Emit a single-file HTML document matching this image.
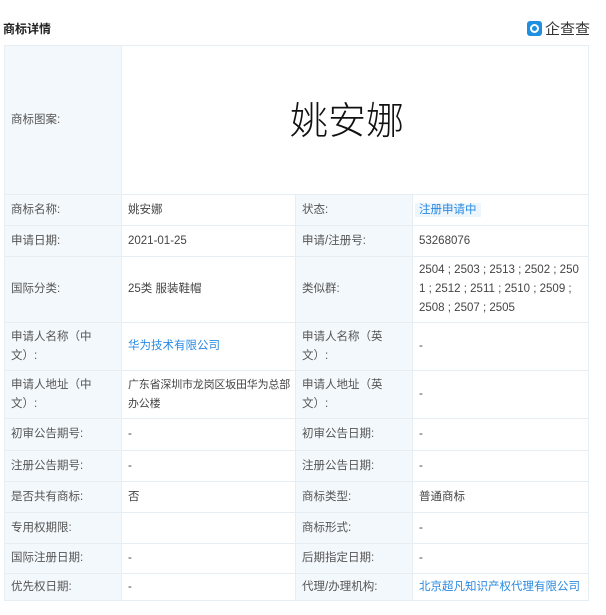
<!DOCTYPE html>
<html><head><meta charset="utf-8"><style>
body{margin:0;background:#fff;width:606px;height:615px;overflow:hidden;font-family:"Liberation Sans","Noto Sans CJK SC",sans-serif;font-size:11.5px;color:#444;position:relative}
.title{position:absolute;left:3px;top:20px;font-size:12px;font-weight:bold;color:#222}
.logo{position:absolute;left:527px;top:19px;height:18px;display:flex;align-items:center}
.logo .ic{width:15px;height:15px;background:#1e8fe1;border-radius:3px;position:relative;margin-right:3px}
.logo .ic:after{content:"";position:absolute;left:3px;top:3px;width:5px;height:5px;border:2px solid #fff;border-radius:50%}
.logo span{font-size:15px;color:#333;letter-spacing:0px}
table{position:absolute;left:4px;top:45px;border-collapse:collapse;table-layout:fixed;width:584px}
td{border:1px solid #e6edf3;padding:0 0 0 6px;vertical-align:middle;line-height:19px;white-space:nowrap;overflow:hidden}
td.l{background:#f3f8fc;color:#555}
.a{color:#2a8ae0}
.tag{background:#eef6fd;color:#2a8ae0;padding:1px 4px;margin-left:-4px}
</style></head><body>
<div class="title">商标详情</div>
<div class="logo"><div class="ic"></div><span>企查查</span></div>
<table>
<colgroup><col style="width:117px"><col style="width:174px"><col style="width:117px"><col style="width:176px"></colgroup>
<tr style="height:149px"><td class="l">商标图案:</td><td colspan="3" style="text-align:center;padding:0;font-size:38px;color:#111;font-family:'Noto Sans CJK SC',sans-serif;font-weight:300"><span style="position:relative;left:-8px;top:-3px">姚安娜</span></td></tr>
<tr style="height:31px"><td class="l">商标名称:</td><td>姚安娜</td><td class="l">状态:</td><td><span class="tag">注册申请中</span></td></tr>
<tr style="height:31px"><td class="l">申请日期:</td><td>2021-01-25</td><td class="l">申请/注册号:</td><td>53268076</td></tr>
<tr style="height:66px"><td class="l">国际分类:</td><td>25类 服装鞋帽</td><td class="l">类似群:</td><td>2504 ; 2503 ; 2513 ; 2502 ; 250<br>1 ; 2512 ; 2511 ; 2510 ; 2509 ;<br>2508 ; 2507 ; 2505</td></tr>
<tr style="height:48px"><td class="l">申请人名称（中<br>文）:</td><td class="a">华为技术有限公司</td><td class="l">申请人名称（英<br>文）:</td><td>-</td></tr>
<tr style="height:48px"><td class="l">申请人地址（中<br>文）:</td><td style="font-size:11px;letter-spacing:-0.2px">广东省深圳市龙岗区坂田华为总部<br>办公楼</td><td class="l">申请人地址（英<br>文）:</td><td>-</td></tr>
<tr style="height:32px"><td class="l">初审公告期号:</td><td>-</td><td class="l">初审公告日期:</td><td>-</td></tr>
<tr style="height:31px"><td class="l">注册公告期号:</td><td>-</td><td class="l">注册公告日期:</td><td>-</td></tr>
<tr style="height:31px"><td class="l">是否共有商标:</td><td>否</td><td class="l">商标类型:</td><td>普通商标</td></tr>
<tr style="height:31px"><td class="l">专用权期限:</td><td></td><td class="l">商标形式:</td><td>-</td></tr>
<tr style="height:30px"><td class="l">国际注册日期:</td><td>-</td><td class="l">后期指定日期:</td><td>-</td></tr>
<tr style="height:27px"><td class="l">优先权日期:</td><td>-</td><td class="l">代理/办理机构:</td><td class="a">北京超凡知识产权代理有限公司</td></tr>
</table>
</body></html>
